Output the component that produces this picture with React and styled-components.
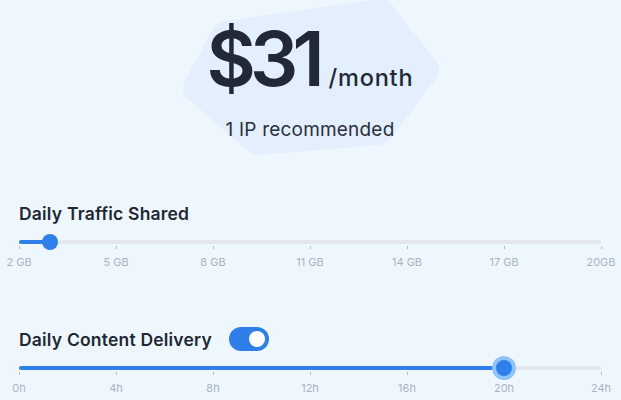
import React from 'react'
import styled, { createGlobalStyle } from 'styled-components'

const GlobalStyle = createGlobalStyle`
    html, body {
        margin: 0;
        padding: 0;
        background: #eff7fe;
        font-family: Inter, "Noto Sans", sans-serif;
    }
`

const BLUE = '#2e7fe8'

const traffic = ['2 GB', '5 GB', '8 GB', '11 GB', '14 GB', '17 GB', '20GB']
const hours = ['0h', '4h', '8h', '12h', '16h', '20h', '24h']

const Slider = ({ value, marks, halo }) => (
    <SliderBox>
        <Track>
            <Fill style={{ width: `${value}%` }} />
            <Thumb halo={halo} style={{ left: `${value}%` }} />
        </Track>
        <Marks>
            {marks.map((m) => (
                <Mark key={m}>
                    <span className='tick' />
                    <span className='label'>{m}</span>
                </Mark>
            ))}
        </Marks>
    </SliderBox>
)

const App = () => {
    return (
        <Page>
            <GlobalStyle />
            <Header>
                <Blob viewBox='0 0 621 160' preserveAspectRatio='none'>
                    <path
                        d='M226 36 L380 14 L424 70 L378 130 L258 140 L198 88 Z'
                        fill='#e3effd'
                        stroke='#e3effd'
                        strokeWidth='30'
                        strokeLinejoin='round'
                    />
                </Blob>
                <Price>
                    <span className='amount'>$31</span>
                    <span className='per'>/month</span>
                </Price>
                <Sub>1 IP recommended</Sub>
            </Header>

            <Section className='traffic'>
                <Title>Daily Traffic Shared</Title>
                <Slider value={5.4} marks={traffic} />
            </Section>

            <Section className='delivery'>
                <Title>
                    Daily Content Delivery
                    <Toggle on />
                </Title>
                <Slider value={83.33} marks={hours} halo />
            </Section>
        </Page>
    )
}

const Page = styled.div`
    width: 621px;
    height: 400px;
    overflow: hidden;
    padding: 0 20px 0 19px;
    box-sizing: border-box;
    color: #222733;
`

const Header = styled.header`
    position: relative;
    height: 160px;
    display: flex;
    flex-direction: column;
    align-items: center;
`

const Blob = styled.svg`
    position: absolute;
    top: 0;
    left: -19px;
    width: 621px;
    height: 160px;
`

const Price = styled.div`
    position: relative;
    display: flex;
    align-items: baseline;
    margin-top: 14px;
    .amount {
        font-size: 76px;
        font-weight: 600;
        letter-spacing: -6px;
        line-height: 88px;
        color: #232836;
    }
    .per {
        font-size: 23.5px;
        font-weight: 500;
        letter-spacing: 0.8px;
        margin-left: 10px;
        color: #232836;
    }
`

const Sub = styled.div`
    position: relative;
    font-size: 19px;
    font-weight: 400;
    color: #2a2f3b;
    margin-top: 16px;
    letter-spacing: 0.2px;
`

const Section = styled.section`
    &.traffic {
        margin-top: 40px;
    }
    &.delivery {
        margin-top: 57px;
    }
`

const Title = styled.h3`
    margin: 0;
    height: 26px;
    display: flex;
    align-items: center;
    gap: 17px;
    font-size: 17.5px;
    font-weight: 600;
    letter-spacing: 0.2px;
    color: #222733;
`

const Toggle = styled.span`
    position: relative;
    width: 40px;
    height: 24px;
    border-radius: 12px;
    background: ${(p) => (p.on ? BLUE : '#cfd6e0')};
    &::after {
        content: '';
        position: absolute;
        top: 4px;
        left: ${(p) => (p.on ? '20px' : '4px')};
        width: 16px;
        height: 16px;
        border-radius: 50%;
        background: #fff;
    }
`

const SliderBox = styled.div`
    margin-top: 14px;
`

const Track = styled.div`
    position: relative;
    height: 4px;
    border-radius: 2px;
    background: #e4e8ee;
`

const Fill = styled.div`
    height: 100%;
    border-radius: 2px;
    background: ${BLUE};
`

const Thumb = styled.div`
    position: absolute;
    top: 50%;
    width: 16px;
    height: 16px;
    border-radius: 50%;
    background: ${BLUE};
    transform: translate(-50%, -50%);
    box-shadow: ${(p) => (p.halo ? '0 0 0 4px #8fc4fb' : 'none')};
`

const Marks = styled.div`
    display: flex;
    justify-content: space-between;
`

const Mark = styled.div`
    width: 0;
    display: flex;
    flex-direction: column;
    align-items: center;
    .tick {
        width: 1px;
        height: 3px;
        margin-top: 2px;
        background: #b5bdc9;
    }
    .label {
        margin-top: 6px;
        font-size: 11px;
        color: #aab3c0;
        white-space: nowrap;
    }
`

export default App
